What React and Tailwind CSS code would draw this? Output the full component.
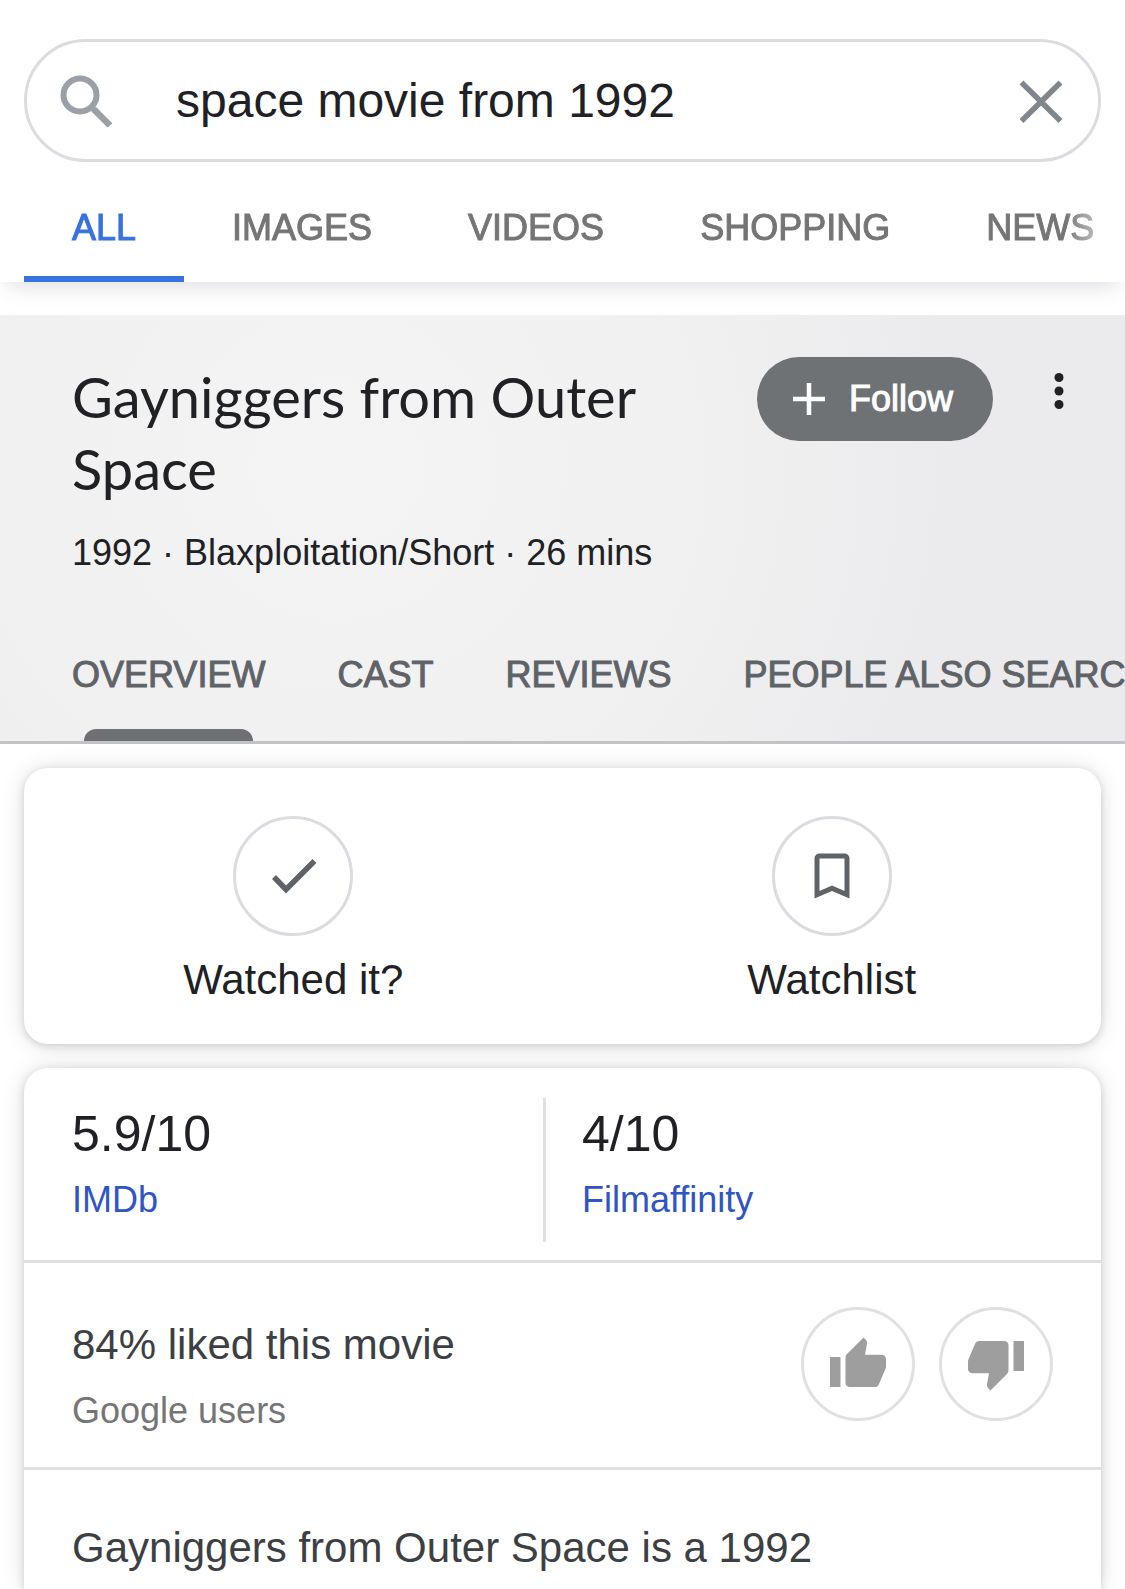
const searchTabs = ["ALL", "IMAGES", "VIDEOS", "SHOPPING", "NEWS"];
const panelTabs = ["OVERVIEW", "CAST", "REVIEWS", "PEOPLE ALSO SEARCH FOR"];

const ratings = [
  { score: "5.9/10", source: "IMDb" },
  { score: "4/10", source: "Filmaffinity" },
];

function SearchIcon() {
  return (
    <svg className="size-13 shrink-0" viewBox="0 0 52 52" fill="none" stroke="#9aa0a6" aria-hidden="true">
      <circle cx="20" cy="20" r="16.5" strokeWidth="6" />
      <path d="M33.500 34 L50 50.500" strokeWidth="6.5" />
      <path d="M31 32.500 L35 36" strokeWidth="4" />
    </svg>
  );
}

function CloseIcon() {
  return (
    <svg className="size-11" viewBox="0 0 44 44" fill="none" stroke="#80868b" strokeWidth="5.5" aria-hidden="true">
      <path d="M2.500 3.500 L41.500 42 M41.500 3.500 L2.500 42" />
    </svg>
  );
}

function PlusIcon() {
  return (
    <svg className="size-8" viewBox="0 0 32 32" stroke="currentColor" strokeWidth="4.5" aria-hidden="true">
      <path d="M16 0 V32 M0 16 H32" />
    </svg>
  );
}

function MoreIcon() {
  return (
    <svg className="h-9 w-3" viewBox="0 0 12 36" fill="#202124" aria-hidden="true">
      <circle cx="6" cy="4.5" r="4.5" />
      <circle cx="6" cy="18" r="4.5" />
      <circle cx="6" cy="31.5" r="4.5" />
    </svg>
  );
}

function CheckIcon() {
  return (
    <svg className="size-15" viewBox="0 0 60 60" fill="none" stroke="#5f6368" strokeWidth="5.5" aria-hidden="true">
      <path d="M11 31 L23 43.500 L51.500 15" />
    </svg>
  );
}

function BookmarkIcon() {
  return (
    <svg className="size-15" viewBox="0 0 24 24" fill="#5f6368" aria-hidden="true">
      <path d="M17 3H7c-1.1 0-2 .9-2 2v16l7-3 7 3V5c0-1.1-.9-2-2-2zm0 15-5-2.18L7 18V5h10v13z" />
    </svg>
  );
}

function ThumbIcon({ down }) {
  return (
    <svg className={down ? "size-15 rotate-180" : "size-15"} viewBox="0 0 60 60" fill="#9e9e9e" aria-hidden="true">
      <path d="M2 23h10.500v30H2z" />
      <path d="M17.500 24c0-1.800.4-2.800 1.500-3.900L35.500 3.500l2.300 2.300c1 1 1.400 2.200 1.200 3.600L37 20.700h16c3.200 0 5 1.800 5 4.300v7c0 1-.1 1.800-.5 2.700l-6.600 15.500c-.8 1.900-2 2.800-4 2.800H22c-2.800 0-4.500-1.700-4.500-4.500z" />
    </svg>
  );
}

function CircleAction({ label, children }) {
  return (
    <button className="flex flex-1 flex-col items-center gap-4 text-[42px] leading-[56px] text-[#202124]">
      <span className="flex size-30 items-center justify-center rounded-full border-3 border-[#dadce0]">
        {children}
      </span>
      {label}
    </button>
  );
}

export default function App() {
  return (
    <div className="flex min-h-screen flex-col overflow-hidden bg-white font-['Liberation_Sans',Arial,sans-serif]">
      {/* Search header */}
      <header className="relative pt-[39px] shadow-[0_12px_20px_-8px_rgba(60,64,90,0.18)]">
        <form className="mx-6 flex h-[123px] items-center rounded-full border-3 border-[#dadce0] pr-[35px] pl-[33px]">
          <SearchIcon />
          <input
            type="text"
            aria-label="Search"
            defaultValue="space movie from 1992"
            className="ml-16 min-w-0 flex-1 bg-transparent text-[48px] leading-[60px] text-[#202124] outline-none"
          />
          <button type="button" aria-label="Clear">
            <CloseIcon />
          </button>
        </form>
        <nav className="ml-6 flex overflow-hidden mask-[linear-gradient(to_right,#000_calc(100%_-_60px),transparent)]">
          {searchTabs.map((tab, index) => (
            <a
              key={tab}
              href="#"
              className={`border-b-6 px-12 pt-[46px] pb-[28px] text-[36px] leading-[40px] [-webkit-text-stroke:1px] ${
                index === 0 ? "border-[#3871e0] text-[#3871e0]" : "border-transparent text-[#757575]"
              }`}
            >
              {tab}
            </a>
          ))}
        </nav>
      </header>

      {/* Movie title and panel tabs */}
      <section className="mt-[33px] border-b-3 border-[#c1c3c5] bg-[radial-gradient(circle_at_30%_35%,#f4f4f5,#f0f0f1_45%,#ebebed_75%)]">
        <div className="flex items-start pt-[42px] pr-[60px] pl-[72px]">
          <div className="flex-1 pt-1 text-[#202124]">
            <h1 className="max-w-[620px] font-['Lato',sans-serif] text-[56px] leading-[72px]">
              Gayniggers from Outer Space
            </h1>
            <p className="mt-6 text-[36px] leading-[48px]">1992 · Blaxploitation/Short · 26 mins</p>
          </div>
          <button className="flex h-21 items-center gap-6 rounded-full bg-[#6e7275] pr-10 pl-9 text-[36px] text-white [-webkit-text-stroke:1px]">
            <PlusIcon />
            Follow
          </button>
          <button aria-label="More options" className="mt-4 ml-15">
            <MoreIcon />
          </button>
        </div>
        <nav className="mt-[78px] flex gap-18 overflow-hidden pl-18 whitespace-nowrap">
          {panelTabs.map((tab, index) => (
            <a
              key={tab}
              href="#"
              className="flex flex-col items-stretch gap-[34px] text-[36px] leading-[40px] text-[#5f6368] [-webkit-text-stroke:1px]"
            >
              {tab}
              {index === 0 && <span className="mx-3 h-3 rounded-t-xl bg-[#6e7073]" />}
            </a>
          ))}
        </nav>
      </section>

      {/* Watched / watchlist */}
      <section className="mx-6 mt-6 flex rounded-3xl bg-white pt-12 pb-9 shadow-[0_2px_8px_rgba(0,0,0,0.14),0_1px_24px_rgba(0,0,0,0.12)]">
        <CircleAction label="Watched it?">
          <CheckIcon />
        </CircleAction>
        <CircleAction label="Watchlist">
          <BookmarkIcon />
        </CircleAction>
      </section>

      <section className="mx-6 mt-6 flex-1 rounded-t-3xl bg-white shadow-[0_2px_8px_rgba(0,0,0,0.14),0_1px_24px_rgba(0,0,0,0.12)]">
        {/* Ratings */}
        <div className="flex border-b-3 border-[#dfe0e2] pt-[30px] pb-[18px] pl-12">
          {ratings.map((rating, index) => (
            <div
              key={rating.source}
              className={index === 0 ? "h-36 w-[474px] border-r-3 border-[#dfe0e2]" : "h-36 pl-9"}
            >
              <p className="pt-1 text-[50px] leading-[64px] text-[#202124]">{rating.score}</p>
              <a href="#" className="mt-2.5 block text-[36px] leading-[48px] text-[#2f55c4]">
                {rating.source}
              </a>
            </div>
          ))}
        </div>

        {/* Audience score */}
        <div className="flex items-start border-b-3 border-[#dfe0e2] px-12 pt-11 pb-8">
          <div className="flex-1 pt-2">
            <p className="text-[42px] leading-[60px] text-[#3c4043]">84% liked this movie</p>
            <p className="mt-3 text-[36px] leading-[48px] text-[#757575]">Google users</p>
          </div>
          <div className="flex gap-6">
            <button
              aria-label="Like"
              className="flex size-[114px] items-center justify-center rounded-full border-3 border-[#e0e0e0]"
            >
              <ThumbIcon />
            </button>
            <button
              aria-label="Dislike"
              className="flex size-[114px] items-center justify-center rounded-full border-3 border-[#e0e0e0]"
            >
              <ThumbIcon down />
            </button>
          </div>
        </div>

        <p className="px-12 pt-12 text-[42px] leading-[60px] text-[#3c4043]">
          Gayniggers from Outer Space is a 1992
        </p>
      </section>
    </div>
  );
}
